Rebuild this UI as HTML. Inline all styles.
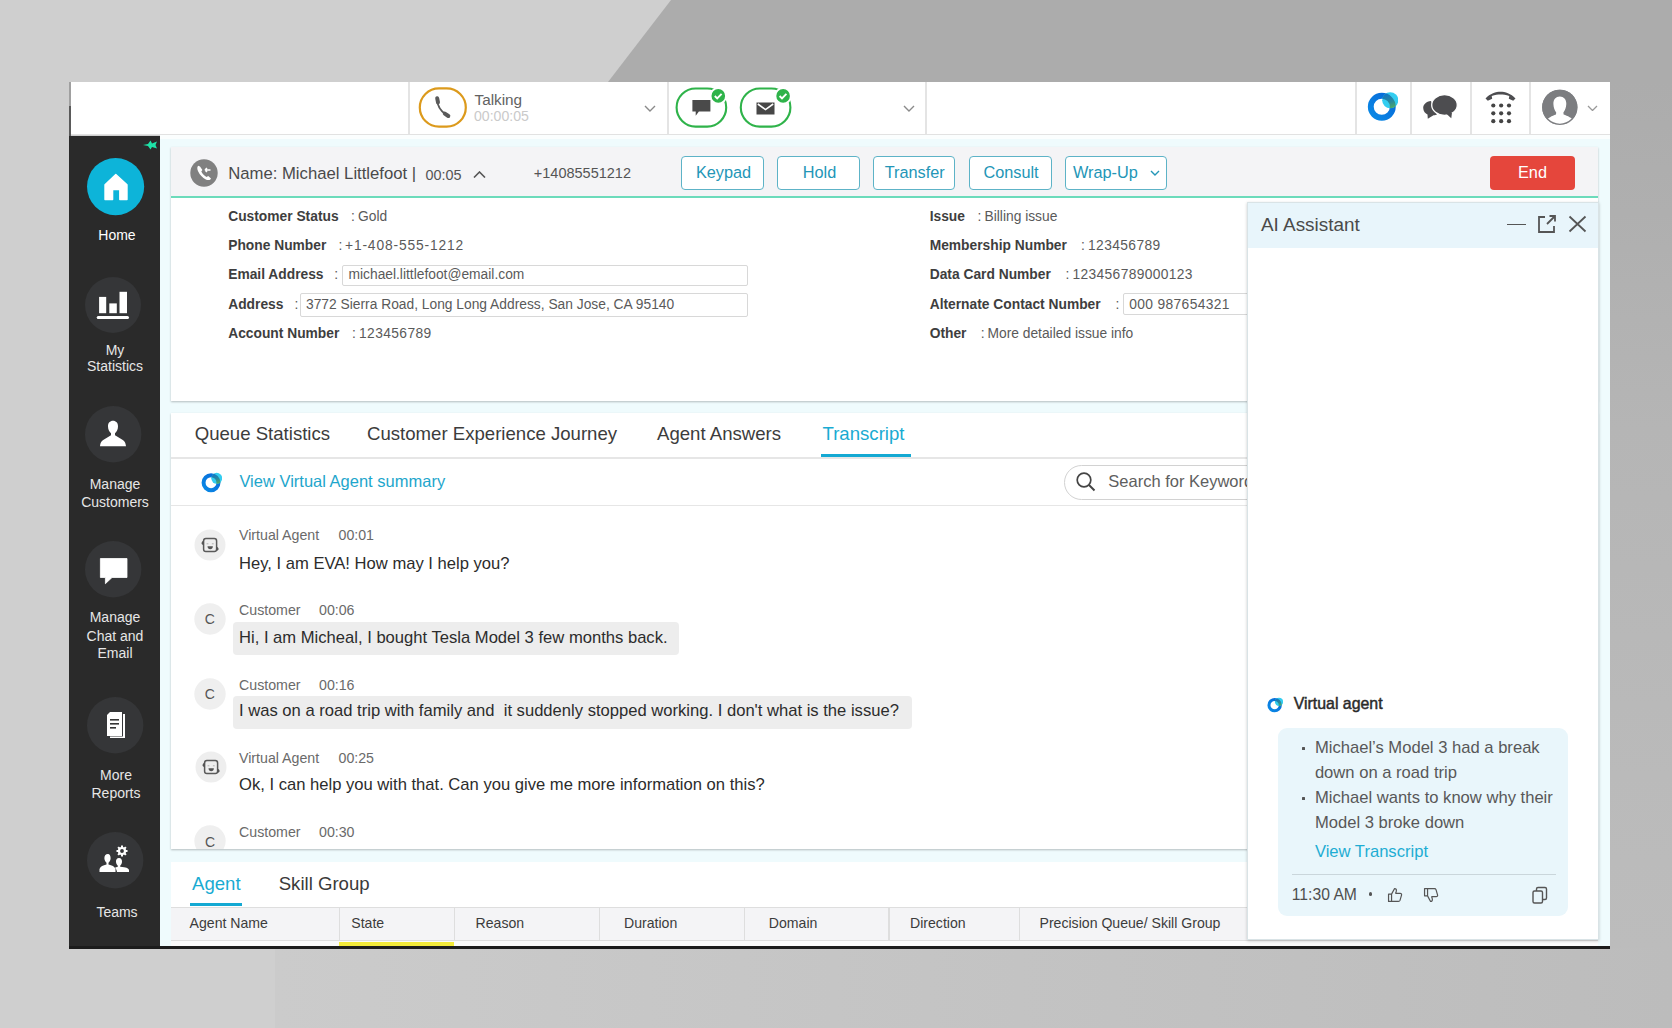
<!DOCTYPE html><html><head><meta charset="utf-8"><style>
html,body{margin:0;padding:0;}
body{width:1672px;height:1028px;overflow:hidden;position:relative;background:#cfcfcf;font-family:"Liberation Sans",sans-serif;}
.a{position:absolute;}
.t{position:absolute;white-space:pre;}
</style></head><body>
<svg class="a" style="left:0;top:0" width="1672" height="1028">
<defs>
<linearGradient id="rs" x1="0" y1="0" x2="0" y2="1"><stop offset="0" stop-color="#acacac"/><stop offset="0.15" stop-color="#afafaf"/><stop offset="0.4" stop-color="#b5b5b5"/><stop offset="0.8" stop-color="#bababa"/><stop offset="1" stop-color="#bcbcbc"/></linearGradient>
<linearGradient id="bt" x1="0" y1="0" x2="1" y2="0"><stop offset="0" stop-color="#cbcbcb"/><stop offset="0.4" stop-color="#c5c5c5"/><stop offset="1" stop-color="#bcbcbc"/></linearGradient>
</defs>
<rect width="1672" height="1028" fill="#cfcfcf"/>
<polygon points="671,0 1672,0 1672,82 608,82" fill="#acacac"/>
<rect x="1610" y="82" width="62" height="866" fill="url(#rs)"/>
<rect x="275" y="948" width="1397" height="80" fill="url(#bt)"/>
</svg>
<div class="a" style="left:69px;top:82px;width:1541px;height:53px;background:#fff;"></div>
<div class="a" style="left:69px;top:134px;width:1541px;height:1px;background:#e2e2e2;"></div>
<div class="a" style="left:69px;top:82px;width:1.5px;height:24px;background:#a0a0a0;"></div>
<div class="a" style="left:69px;top:106px;width:1.5px;height:30px;background:#5a5a5a;"></div>
<div class="a" style="left:408px;top:82px;width:1.5px;height:52px;background:#e4e4e4;"></div>
<div class="a" style="left:667px;top:82px;width:1.5px;height:52px;background:#e4e4e4;"></div>
<div class="a" style="left:925px;top:82px;width:1.5px;height:52px;background:#e4e4e4;"></div>
<div class="a" style="left:1355px;top:82px;width:1.5px;height:52px;background:#e4e4e4;"></div>
<div class="a" style="left:1410px;top:82px;width:1.5px;height:52px;background:#e4e4e4;"></div>
<div class="a" style="left:1470px;top:82px;width:1.5px;height:52px;background:#e4e4e4;"></div>
<div class="a" style="left:1529px;top:82px;width:1.5px;height:52px;background:#e4e4e4;"></div>
<div class="a" style="left:69px;top:136px;width:91px;height:812px;background:#2a2a2a;"></div>
<div class="a" style="left:160px;top:135px;width:1450px;height:813px;background:#effbfd;"></div>
<div class="a" style="left:160px;top:135px;width:1450px;height:4px;background:#fbfefe;"></div>
<svg class="a" style="left:414px;top:84px;" width="58" height="48" viewBox="0 0 58 48"><rect x="5.8" y="4.3" width="46" height="38.4" rx="19.2" ry="19.2" fill="none" stroke="#dc9a1c" stroke-width="2.2"/>
<path d="M23.2 16 C23.4 21.5 26 26.5 32 30.6" fill="none" stroke="#5a5a5a" stroke-width="1.9"/><path d="M23.2 14.3 L24 18.3" stroke="#5a5a5a" stroke-width="4" stroke-linecap="round"/><path d="M30.8 29.6 L34.3 32" stroke="#5a5a5a" stroke-width="4" stroke-linecap="round"/></svg>
<div class="t" style="left:474.5px;top:91.6px;font-size:15.3px;line-height:15.3px;color:#626262;font-weight:400;">Talking</div>
<div class="t" style="left:474.0px;top:109.4px;font-size:14.1px;line-height:14.1px;color:#cacaca;font-weight:400;">00:00:05</div>
<svg class="a" style="left:644.0px;top:104.5px;" width="12" height="7.0" viewBox="0 0 12 7.0"><path d="M1 1 L6.0 6.0 L11 1" fill="none" stroke="#8a8a8a" stroke-width="1.4"/></svg>
<svg class="a" style="left:672px;top:84px;" width="60" height="48" viewBox="0 0 60 48"><rect x="4.6" y="4.5" width="49.6" height="38.1" rx="19" ry="19" fill="none" stroke="#2fb34a" stroke-width="2.1"/>
<path d="M20.4 15.9 h18 v11.6 h-11.5 l-3.2 4.2 v-4.2 h-3.3 z" fill="#4a4a4a"/>
<circle cx="46.3" cy="11.9" r="7.8" fill="#2fb34a" stroke="#fff" stroke-width="2"/>
<path d="M42.8 12 l2.4 2.4 l4.4 -4.6" fill="none" stroke="#fff" stroke-width="1.9"/></svg>
<svg class="a" style="left:736px;top:84px;" width="60" height="48" viewBox="0 0 60 48"><rect x="4.8" y="4.5" width="49.6" height="38.1" rx="19" ry="19" fill="none" stroke="#2fb34a" stroke-width="2.1"/>
<rect x="20.5" y="18.5" width="18" height="12" fill="#474747"/>
<path d="M21.8 20 l7.7 5.6 l7.7 -5.6" fill="none" stroke="#fff" stroke-width="1.6"/>
<circle cx="47.1" cy="11.9" r="7.8" fill="#2fb34a" stroke="#fff" stroke-width="2"/>
<path d="M43.6 12 l2.4 2.4 l4.4 -4.6" fill="none" stroke="#fff" stroke-width="1.9"/></svg>
<svg class="a" style="left:902.6px;top:104.5px;" width="12" height="7.0" viewBox="0 0 12 7.0"><path d="M1 1 L6.0 6.0 L11 1" fill="none" stroke="#8a8a8a" stroke-width="1.4"/></svg>
<svg class="a" style="left:1367.2px;top:91.2px;" width="31" height="31" viewBox="0 0 31 31"><defs><linearGradient id="wg13827" x1="0" y1="1" x2="1" y2="0"><stop offset="0" stop-color="#0a8ae6"/><stop offset="1" stop-color="#0768d8"/></linearGradient>
<linearGradient id="wo13827" x1="0" y1="0" x2="0.3" y2="1"><stop offset="0" stop-color="#0b6fd0"/><stop offset="0.5" stop-color="#2a8a9a"/><stop offset="1" stop-color="#6cc040"/></linearGradient>
<clipPath id="wc13827"><circle cx="23.25" cy="9.299999999999999" r="8.06"/></clipPath></defs>
<circle cx="14.786999999999999" cy="15.81" r="11.004999999999999" fill="none" stroke="url(#wg13827)" stroke-width="5.89"/>
<circle cx="23.25" cy="9.299999999999999" r="8.06" fill="#33cdf0"/>
<circle cx="14.786999999999999" cy="15.81" r="11.004999999999999" fill="none" stroke="url(#wo13827)" stroke-width="5.89" clip-path="url(#wc13827)"/></svg>
<svg class="a" style="left:1421px;top:93px;" width="40" height="30" viewBox="0 0 40 30"><path d="M10 8 C5 8.5 2.2 11.5 2.2 15 C2.2 18.5 4.5 20.5 6.5 21.5 L6.8 25.8 L12.5 22.3 C14 22.2 15 22 16 21.5 Z" fill="#4d4d50"/>
<ellipse cx="23.5" cy="12" rx="12.8" ry="10.3" fill="#4d4d50" stroke="#fff" stroke-width="1.3"/>
<path d="M25 20.5 L30.3 25.3 L31 19.5 Z" fill="#4d4d50"/></svg>
<svg class="a" style="left:1484px;top:90px;" width="34" height="36" viewBox="0 0 34 36"><path d="M1.5 8.5 C6 3.5 12 1.8 16.5 1.8 C21 1.8 27 3.5 31.5 8.5 L29.2 10.8 L24.8 8.8 L25.3 6 C22 4.8 19 4.5 16.5 4.5 C14 4.5 11 4.8 7.7 6 L8.2 8.8 L3.8 10.8 Z" fill="#4d4d50"/>
<circle cx="9.3" cy="15.5" r="2.1" fill="#444"/><circle cx="9.3" cy="23.35" r="2.1" fill="#444"/><circle cx="9.3" cy="31.2" r="2.1" fill="#444"/><circle cx="17.15" cy="15.5" r="2.1" fill="#444"/><circle cx="17.15" cy="23.35" r="2.1" fill="#444"/><circle cx="17.15" cy="31.2" r="2.1" fill="#444"/><circle cx="25.0" cy="15.5" r="2.1" fill="#444"/><circle cx="25.0" cy="23.35" r="2.1" fill="#444"/><circle cx="25.0" cy="31.2" r="2.1" fill="#444"/></svg>
<svg class="a" style="left:1540px;top:89px;" width="38" height="37" viewBox="0 0 38 37"><defs><clipPath id="avc"><circle cx="19.8" cy="18.3" r="17.5"/></clipPath></defs>
<circle cx="19.8" cy="18.3" r="17.6" fill="#7c7d80"/>
<g clip-path="url(#avc)"><path d="M19.8 7.5 C15.8 7.5 13.3 10.5 13.4 15 C13.5 18.5 14.6 21.5 16.2 23.5 L16 25.5 C12 27 8 28.5 5 33 L5 38 L35 38 L35 33 C32 28.5 27.5 27 23.6 25.5 L23.4 23.5 C25 21.5 26.2 18.5 26.3 15 C26.4 10.5 23.8 7.5 19.8 7.5 Z" fill="#fff"/></g>
<circle cx="19.8" cy="18.3" r="17" fill="none" stroke="#7c7d80" stroke-width="1.3"/></svg>
<svg class="a" style="left:1586.9px;top:104.75px;" width="11" height="6.5" viewBox="0 0 11 6.5"><path d="M1 1 L5.5 5.5 L10 1" fill="none" stroke="#999" stroke-width="1.3"/></svg>
<svg class="a" style="left:141px;top:139px;" width="18" height="12" viewBox="0 0 18 12"><path d="M2 6 L7 5 L9.5 1.5 L11 4.5 L16 2.5 L14.5 6 L16 9.5 L11 8 L9.5 10.5 L7 7 Z" fill="#1ee3a8"/></svg>
<svg class="a" style="left:85.69999999999999px;top:157.4px;" width="59.2" height="59.2" viewBox="0 0 59.2 59.2"><circle cx="29.6" cy="29.6" r="28.6" fill="#0db4d9"/></svg>
<svg class="a" style="left:101.5px;top:172px;" width="28" height="30" viewBox="0 0 28 30"><path d="M13.8 2.5 L25 12.8 L25 27.5 L17.8 27.5 L17.8 17.5 L10.6 17.5 L10.6 27.5 L3 27.5 L3 12.8 Z" fill="#fff" stroke="#fff" stroke-width="1.4" stroke-linejoin="round"/></svg>
<div class="t" style="left:72.0px;width:90px;text-align:center;top:228.1px;font-size:14px;line-height:14px;color:#fff;font-weight:400;">Home</div>
<svg class="a" style="left:83.8px;top:276.4px;" width="58" height="58" viewBox="0 0 58 58"><circle cx="29" cy="29" r="28" fill="#353638"/></svg>
<svg class="a" style="left:96px;top:290px;" width="34" height="30" viewBox="0 0 34 30"><rect x="3.1" y="6.9" width="7.1" height="16.3" fill="#fff"/><rect x="13.3" y="13.4" width="7.5" height="9.8" fill="#fff"/><rect x="23.5" y="1.8" width="7.5" height="21.4" fill="#fff"/><rect x="0.7" y="26" width="32.3" height="3" rx="1.5" fill="#fff"/></svg>
<div class="t" style="left:70.0px;width:90px;text-align:center;top:342.9px;font-size:14px;line-height:14px;color:#e6e6e6;font-weight:400;">My</div>
<div class="t" style="left:70.0px;width:90px;text-align:center;top:359.4px;font-size:14px;line-height:14px;color:#e6e6e6;font-weight:400;">Statistics</div>
<svg class="a" style="left:83.8px;top:405.3px;" width="58.4" height="58.4" viewBox="0 0 58.4 58.4"><circle cx="29.2" cy="29.2" r="28.2" fill="#353638"/></svg>
<svg class="a" style="left:99px;top:419px;" width="28" height="30" viewBox="0 0 28 30"><path d="M14 1.8 C11 1.8 8.9 4 9 7.5 C9.1 10.5 10.3 13 12 14.3 L12 16.3 L5 20.5 C3 21.8 1.5 23 1 27.3 L27 27.3 C26.5 23 25 21.8 23 20.5 L16 16.3 L16 14.3 C17.7 13 18.9 10.5 19 7.5 C19.1 4 17 1.8 14 1.8 Z" fill="#fff"/></svg>
<div class="t" style="left:70.0px;width:90px;text-align:center;top:476.9px;font-size:14px;line-height:14px;color:#e6e6e6;font-weight:400;">Manage</div>
<div class="t" style="left:70.0px;width:90px;text-align:center;top:494.6px;font-size:14px;line-height:14px;color:#e6e6e6;font-weight:400;">Customers</div>
<svg class="a" style="left:83.6px;top:540.0999999999999px;" width="58.4" height="58.4" viewBox="0 0 58.4 58.4"><circle cx="29.2" cy="29.2" r="28.2" fill="#353638"/></svg>
<svg class="a" style="left:98px;top:556px;" width="32" height="30" viewBox="0 0 32 30"><path d="M2.4 2.5 h26.6 v19 h-15 l-6.6 6.2 v-6.2 h-5 z" fill="#fff" stroke="#fff" stroke-width="0.8" stroke-linejoin="round"/></svg>
<div class="t" style="left:70.0px;width:90px;text-align:center;top:610.1px;font-size:14px;line-height:14px;color:#e6e6e6;font-weight:400;">Manage</div>
<div class="t" style="left:70.0px;width:90px;text-align:center;top:628.5px;font-size:14px;line-height:14px;color:#e6e6e6;font-weight:400;">Chat and</div>
<div class="t" style="left:70.0px;width:90px;text-align:center;top:646.1px;font-size:14px;line-height:14px;color:#e6e6e6;font-weight:400;">Email</div>
<svg class="a" style="left:85.8px;top:696.3px;" width="58.4" height="58.4" viewBox="0 0 58.4 58.4"><circle cx="29.2" cy="29.2" r="28.2" fill="#353638"/></svg>
<svg class="a" style="left:104px;top:710px;" width="24" height="30" viewBox="0 0 24 30"><path d="M6 2 h12 v24 h-15 v-21 z" fill="#fff"/><path d="M19 4 h2 v24 h-15 v-1.5 h13 z" fill="#fff"/><rect x="6" y="9" width="9" height="1.6" fill="#353535"/><rect x="6" y="13" width="9" height="1.6" fill="#353535"/><rect x="6" y="17" width="6" height="1.6" fill="#353535"/></svg>
<div class="t" style="left:71.0px;width:90px;text-align:center;top:767.7px;font-size:14px;line-height:14px;color:#e6e6e6;font-weight:400;">More</div>
<div class="t" style="left:71.0px;width:90px;text-align:center;top:785.7px;font-size:14px;line-height:14px;color:#e6e6e6;font-weight:400;">Reports</div>
<svg class="a" style="left:85.8px;top:831.3px;" width="58.4" height="58.4" viewBox="0 0 58.4 58.4"><circle cx="29.2" cy="29.2" r="28.2" fill="#353638"/></svg>
<svg class="a" style="left:98px;top:844.5px;" width="36" height="34" viewBox="0 0 36 34"><path d="M10 9 C7.5 9 6.2 11 6.4 13.5 C6.6 15.5 7.5 17 8.5 17.8 L8.5 19.5 C5 20.3 2.5 21.5 1.5 24 L1.5 27 L17.5 27 L17.5 24 C16.5 21.5 14 20.3 10.5 19.5 L10.5 17.8 C11.5 17 12.4 15.5 12.6 13.5 C12.8 11 11.5 9 10 9 Z" fill="#fff"/>
<path d="M21 13 C18.8 13 17.8 14.8 18 17 C18.2 18.8 19 20 19.8 20.7 L19.8 21.8 C18.5 22 17.5 22.5 17 23 C18 23.8 18.8 25 19 27 L31 27 L31 25 C30.2 23 28.3 22.2 22.2 21.8 L22.2 20.7 C23 20 23.8 18.8 24 17 C24.2 14.8 23.2 13 21 13 Z" fill="#fff"/>
<circle cx="24" cy="6" r="3" fill="none" stroke="#fff" stroke-width="2.2"/>
<rect x="23" y="0.5" width="2" height="2.6" fill="#fff" transform="rotate(0 24 6)"/><rect x="23" y="0.5" width="2" height="2.6" fill="#fff" transform="rotate(45 24 6)"/><rect x="23" y="0.5" width="2" height="2.6" fill="#fff" transform="rotate(90 24 6)"/><rect x="23" y="0.5" width="2" height="2.6" fill="#fff" transform="rotate(135 24 6)"/><rect x="23" y="0.5" width="2" height="2.6" fill="#fff" transform="rotate(180 24 6)"/><rect x="23" y="0.5" width="2" height="2.6" fill="#fff" transform="rotate(225 24 6)"/><rect x="23" y="0.5" width="2" height="2.6" fill="#fff" transform="rotate(270 24 6)"/><rect x="23" y="0.5" width="2" height="2.6" fill="#fff" transform="rotate(315 24 6)"/></svg>
<div class="t" style="left:72.0px;width:90px;text-align:center;top:904.6px;font-size:14px;line-height:14px;color:#e6e6e6;font-weight:400;">Teams</div>
<div class="a" style="left:171px;top:147px;width:1427px;height:254px;background:#fff;box-shadow:0 1px 2px rgba(0,0,0,0.25);"></div>
<div class="a" style="left:171px;top:147px;width:1427px;height:49px;background:#f4f4f6;"></div>
<div class="a" style="left:171px;top:196.3px;width:1427px;height:2px;background:#6cdbbb;"></div>
<svg class="a" style="left:190px;top:159px;" width="28" height="28" viewBox="0 0 28 28"><circle cx="14" cy="14" r="13.7" fill="#808080"/>
<path d="M8.2 6.8 C7 8 7 10 8.2 12.5 C9.8 15.8 12.5 18.8 15.8 20.5 C17.8 21.5 19.5 21.2 20.6 20.2 L21 19.6 L18.2 17 L16.6 18 C14.6 17 12.4 14.8 11.3 12.6 L12.4 11 L10 7.6 Z" fill="#fff"/>
<path d="M15 11 h5.5 M15 11 l2 -1.8 M15 11 l2 1.8" stroke="#fff" stroke-width="1.6" fill="none"/></svg>
<div class="t" style="left:228.2px;top:165.9px;font-size:16.7px;line-height:16.7px;color:#4a4a4a;font-weight:400;">Name: Michael Littlefoot |</div>
<div class="t" style="left:425.6px;top:167.8px;font-size:14.4px;line-height:14.4px;color:#555;font-weight:400;">00:05</div>
<svg class="a" style="left:472.5px;top:170.75px;" width="13" height="7.5" viewBox="0 0 13 7.5"><path d="M1 6.5 L6.5 1 L12 6.5" fill="none" stroke="#555" stroke-width="1.6"/></svg>
<div class="t" style="left:533.8px;top:166.2px;font-size:14.5px;line-height:14.5px;color:#555;font-weight:400;">+14085551212</div>
<div class="a" style="left:681px;top:156px;width:81.4px;height:32px;border:1.8px solid #5db3c7;border-radius:4px;background:#fff;"></div>
<div class="t" style="left:681.0px;width:85px;text-align:center;top:164.2px;font-size:16.3px;line-height:16.3px;color:#2396b7;font-weight:400;">Keypad</div>
<div class="a" style="left:777px;top:156px;width:81.4px;height:32px;border:1.8px solid #5db3c7;border-radius:4px;background:#fff;"></div>
<div class="t" style="left:777.0px;width:85px;text-align:center;top:164.2px;font-size:16.3px;line-height:16.3px;color:#2396b7;font-weight:400;">Hold</div>
<div class="a" style="left:872.5px;top:156px;width:80.9px;height:32px;border:1.8px solid #5db3c7;border-radius:4px;background:#fff;"></div>
<div class="t" style="left:872.5px;width:84.5px;text-align:center;top:164.2px;font-size:16.3px;line-height:16.3px;color:#2396b7;font-weight:400;">Transfer</div>
<div class="a" style="left:968.5px;top:156px;width:81.4px;height:32px;border:1.8px solid #5db3c7;border-radius:4px;background:#fff;"></div>
<div class="t" style="left:968.5px;width:85px;text-align:center;top:164.2px;font-size:16.3px;line-height:16.3px;color:#2396b7;font-weight:400;">Consult</div>
<div class="a" style="left:1064.5px;top:156px;width:100.5px;height:32px;border:1.8px solid #5db3c7;border-radius:4px;background:#fff;"></div>
<div class="t" style="left:1073.0px;top:164.2px;font-size:16.3px;line-height:16.3px;color:#2396b7;font-weight:400;">Wrap-Up</div>
<svg class="a" style="left:1150.0px;top:170.0px;" width="10" height="6.0" viewBox="0 0 10 6.0"><path d="M1 1 L5.0 5.0 L9 1" fill="none" stroke="#2396b7" stroke-width="1.4"/></svg>
<div class="a" style="left:1490px;top:156px;width:85px;height:34px;border-radius:4px;background:#e5463c;"></div>
<div class="t" style="left:1490.0px;width:85px;text-align:center;top:164.2px;font-size:16.3px;line-height:16.3px;color:#fff;font-weight:400;">End</div>
<div class="t" style="left:228.2px;top:209.7px;font-size:13.8px;line-height:13.8px;color:#3e3e3e;font-weight:700;">Customer Status</div>
<div class="t" style="left:351.0px;top:209.7px;font-size:13.8px;line-height:13.8px;color:#5a5a5a;font-weight:400;">:</div>
<div class="t" style="left:358.0px;top:209.7px;font-size:13.8px;line-height:13.8px;color:#5a5a5a;font-weight:400;letter-spacing:0px;">Gold</div>
<div class="t" style="left:228.2px;top:239.0px;font-size:13.8px;line-height:13.8px;color:#3e3e3e;font-weight:700;">Phone Number</div>
<div class="t" style="left:338.5px;top:239.0px;font-size:13.8px;line-height:13.8px;color:#5a5a5a;font-weight:400;">:</div>
<div class="t" style="left:345.0px;top:239.0px;font-size:13.8px;line-height:13.8px;color:#5a5a5a;font-weight:400;letter-spacing:0.85px;">+1-408-555-1212</div>
<div class="t" style="left:228.2px;top:268.3px;font-size:13.8px;line-height:13.8px;color:#3e3e3e;font-weight:700;">Email Address</div>
<div class="t" style="left:334.3px;top:268.3px;font-size:13.8px;line-height:13.8px;color:#5a5a5a;font-weight:400;">:</div>
<div class="a" style="left:342px;top:264.6px;width:406px;height:21.399999999999977px;border:1px solid #d8d8d8;border-radius:2px;background:#fff;box-sizing:border-box;"></div>
<div class="t" style="left:348.5px;top:268.3px;font-size:13.8px;line-height:13.8px;color:#5a5a5a;font-weight:400;letter-spacing:0px;">michael.littlefoot@email.com</div>
<div class="t" style="left:228.2px;top:297.6px;font-size:13.8px;line-height:13.8px;color:#3e3e3e;font-weight:700;">Address</div>
<div class="t" style="left:294.6px;top:297.6px;font-size:13.8px;line-height:13.8px;color:#5a5a5a;font-weight:400;">:</div>
<div class="a" style="left:300px;top:293.2px;width:448px;height:23.80000000000001px;border:1px solid #d8d8d8;border-radius:2px;background:#fff;box-sizing:border-box;"></div>
<div class="t" style="left:306.0px;top:297.6px;font-size:13.8px;line-height:13.8px;color:#5a5a5a;font-weight:400;letter-spacing:0px;">3772 Sierra Road, Long Long Address, San Jose, CA 95140</div>
<div class="t" style="left:228.2px;top:326.9px;font-size:13.8px;line-height:13.8px;color:#3e3e3e;font-weight:700;">Account Number</div>
<div class="t" style="left:352.0px;top:326.9px;font-size:13.8px;line-height:13.8px;color:#5a5a5a;font-weight:400;">:</div>
<div class="t" style="left:359.0px;top:326.9px;font-size:13.8px;line-height:13.8px;color:#5a5a5a;font-weight:400;letter-spacing:0.4px;">123456789</div>
<div class="t" style="left:929.7px;top:209.7px;font-size:13.8px;line-height:13.8px;color:#3e3e3e;font-weight:700;">Issue</div>
<div class="t" style="left:977.5px;top:209.7px;font-size:13.8px;line-height:13.8px;color:#5a5a5a;font-weight:400;">:</div>
<div class="t" style="left:984.5px;top:209.7px;font-size:13.8px;line-height:13.8px;color:#5a5a5a;font-weight:400;letter-spacing:0px;">Billing issue</div>
<div class="t" style="left:929.7px;top:239.0px;font-size:13.8px;line-height:13.8px;color:#3e3e3e;font-weight:700;">Membership Number</div>
<div class="t" style="left:1081.0px;top:239.0px;font-size:13.8px;line-height:13.8px;color:#5a5a5a;font-weight:400;">:</div>
<div class="t" style="left:1088.0px;top:239.0px;font-size:13.8px;line-height:13.8px;color:#5a5a5a;font-weight:400;letter-spacing:0.4px;">123456789</div>
<div class="t" style="left:929.7px;top:268.3px;font-size:13.8px;line-height:13.8px;color:#3e3e3e;font-weight:700;">Data Card Number</div>
<div class="t" style="left:1065.4px;top:268.3px;font-size:13.8px;line-height:13.8px;color:#5a5a5a;font-weight:400;">:</div>
<div class="t" style="left:1072.5px;top:268.3px;font-size:13.8px;line-height:13.8px;color:#5a5a5a;font-weight:400;letter-spacing:0.35px;">123456789000123</div>
<div class="t" style="left:929.7px;top:297.6px;font-size:13.8px;line-height:13.8px;color:#3e3e3e;font-weight:700;">Alternate Contact Number</div>
<div class="t" style="left:1115.4px;top:297.6px;font-size:13.8px;line-height:13.8px;color:#5a5a5a;font-weight:400;">:</div>
<div class="a" style="left:1123px;top:292.7px;width:177px;height:22.80000000000001px;border:1px solid #d8d8d8;border-radius:2px;background:#fff;box-sizing:border-box;"></div>
<div class="t" style="left:1129.3px;top:297.6px;font-size:13.8px;line-height:13.8px;color:#5a5a5a;font-weight:400;letter-spacing:0.35px;">000 987654321</div>
<div class="t" style="left:929.7px;top:326.9px;font-size:13.8px;line-height:13.8px;color:#3e3e3e;font-weight:700;">Other</div>
<div class="t" style="left:980.7px;top:326.9px;font-size:13.8px;line-height:13.8px;color:#5a5a5a;font-weight:400;">:</div>
<div class="t" style="left:987.5px;top:326.9px;font-size:13.8px;line-height:13.8px;color:#5a5a5a;font-weight:400;letter-spacing:0px;">More detailed issue info</div>
<div class="a" style="left:171px;top:413px;width:1427px;height:436px;background:#fff;box-shadow:0 1px 2px rgba(0,0,0,0.25);"></div>
<div class="t" style="left:194.7px;top:424.8px;font-size:18.6px;line-height:18.6px;color:#3c3c3c;font-weight:400;">Queue Statistics</div>
<div class="t" style="left:367.0px;top:424.8px;font-size:18.6px;line-height:18.6px;color:#3c3c3c;font-weight:400;">Customer Experience Journey</div>
<div class="t" style="left:657.0px;top:424.8px;font-size:18.6px;line-height:18.6px;color:#3c3c3c;font-weight:400;">Agent Answers</div>
<div class="t" style="left:822.5px;top:424.8px;font-size:18.6px;line-height:18.6px;color:#19abd2;font-weight:400;">Transcript</div>
<div class="a" style="left:171px;top:457px;width:1427px;height:1.5px;background:#e6e6e6;"></div>
<div class="a" style="left:820.5px;top:453.5px;width:90.5px;height:3.5px;background:#14a9d3;"></div>
<svg class="a" style="left:201.1px;top:472.1px;" width="21" height="21" viewBox="0 0 21 21"><defs><linearGradient id="wg2116" x1="0" y1="1" x2="1" y2="0"><stop offset="0" stop-color="#0a8ae6"/><stop offset="1" stop-color="#0768d8"/></linearGradient>
<linearGradient id="wo2116" x1="0" y1="0" x2="0.3" y2="1"><stop offset="0" stop-color="#0b6fd0"/><stop offset="0.5" stop-color="#2a8a9a"/><stop offset="1" stop-color="#6cc040"/></linearGradient>
<clipPath id="wc2116"><circle cx="15.75" cy="6.3" r="5.46"/></clipPath></defs>
<circle cx="10.017" cy="10.71" r="7.455" fill="none" stroke="url(#wg2116)" stroke-width="3.99"/>
<circle cx="15.75" cy="6.3" r="5.46" fill="#33cdf0"/>
<circle cx="10.017" cy="10.71" r="7.455" fill="none" stroke="url(#wo2116)" stroke-width="3.99" clip-path="url(#wc2116)"/></svg>
<div class="t" style="left:239.4px;top:473.2px;font-size:16.5px;line-height:16.5px;color:#1ea6cc;font-weight:400;">View Virtual Agent summary</div>
<div class="a" style="left:1064px;top:465px;width:260px;height:35px;border:1.3px solid #d2d2d2;border-radius:18px;background:#fff;box-sizing:border-box;"></div>
<svg class="a" style="left:1075px;top:471px;" width="22" height="22" viewBox="0 0 22 22"><circle cx="9" cy="9" r="6.8" fill="none" stroke="#444" stroke-width="1.7"/><path d="M14 14 L19.5 19.5" stroke="#444" stroke-width="1.9"/></svg>
<div class="t" style="left:1108.3px;top:473.3px;font-size:16.5px;line-height:16.5px;color:#5e5e5e;font-weight:400;">Search for Keyword</div>
<div class="a" style="left:171px;top:504.5px;width:1427px;height:1.2px;background:#e6e6e6;"></div>
<svg class="a" style="left:193.8px;top:528.5px;" width="32" height="32" viewBox="0 0 32 32"><circle cx="16" cy="16" r="15.5" fill="#eeeeee"/>
<rect x="9.6" y="9.6" width="13" height="13" rx="2.3" fill="none" stroke="#5a5a5a" stroke-width="1.5"/>
<path d="M10 11.5 C8.5 11.8 7.5 13 7.5 14.5 C8 15.5 9 16 10 16.3 Z" fill="#555"/>
<path d="M22.2 17.5 C23.6 17.8 24.6 19 24.6 20.3 C24.2 21.3 23.2 21.8 22.2 22 Z" fill="#555"/>
<path d="M13.5 17.2 H18.9 C18.9 19.2 17.7 20.2 16.2 20.2 C14.7 20.2 13.5 19.2 13.5 17.2 Z" fill="#555"/>
<path d="M12.6 14.8 h1.8 M17.9 14.8 h1.8" stroke="#aaa" stroke-width="0.9"/></svg>
<div class="t" style="left:239.0px;top:528.3px;font-size:14.2px;line-height:14.2px;color:#6a6a6a;font-weight:400;">Virtual Agent</div>
<div class="t" style="left:338.5px;top:528.3px;font-size:14.2px;line-height:14.2px;color:#6a6a6a;font-weight:400;">00:01</div>
<div class="t" style="left:239.0px;top:555.5px;font-size:16.6px;line-height:16.6px;color:#2c2c2c;font-weight:400;">Hey, I am EVA! How may I help you?</div>
<svg class="a" style="left:193.8px;top:602.8px;" width="32" height="32" viewBox="0 0 32 32"><circle cx="16" cy="16" r="15.7" fill="#efefef"/></svg>
<div class="t" style="left:194.8px;width:30px;text-align:center;top:611.9px;font-size:14px;line-height:14px;color:#555;font-weight:400;">C</div>
<div class="t" style="left:239.0px;top:602.6px;font-size:14.2px;line-height:14.2px;color:#6a6a6a;font-weight:400;">Customer</div>
<div class="t" style="left:319.0px;top:602.6px;font-size:14.2px;line-height:14.2px;color:#6a6a6a;font-weight:400;">00:06</div>
<div class="a" style="left:232.8px;top:622px;width:446.5px;height:32.5px;background:#ededed;border-radius:4px;"></div>
<div class="t" style="left:239.0px;top:629.7px;font-size:16.6px;line-height:16.6px;color:#2c2c2c;font-weight:400;">Hi, I am Micheal, I bought Tesla Model 3 few months back.</div>
<svg class="a" style="left:193.8px;top:677.7px;" width="32" height="32" viewBox="0 0 32 32"><circle cx="16" cy="16" r="15.7" fill="#efefef"/></svg>
<div class="t" style="left:194.8px;width:30px;text-align:center;top:686.8px;font-size:14px;line-height:14px;color:#555;font-weight:400;">C</div>
<div class="t" style="left:239.0px;top:677.5px;font-size:14.2px;line-height:14.2px;color:#6a6a6a;font-weight:400;">Customer</div>
<div class="t" style="left:319.0px;top:677.5px;font-size:14.2px;line-height:14.2px;color:#6a6a6a;font-weight:400;">00:16</div>
<div class="a" style="left:233px;top:695.6px;width:679px;height:33px;background:#ededed;border-radius:4px;"></div>
<div class="t" style="left:239.0px;top:703.3px;font-size:16.6px;line-height:16.6px;color:#2c2c2c;font-weight:400;">I was on a road trip with family and  it suddenly stopped working. I don't what is the issue?</div>
<svg class="a" style="left:194.6px;top:751px;" width="32" height="32" viewBox="0 0 32 32"><circle cx="16" cy="16" r="15.5" fill="#eeeeee"/>
<rect x="9.6" y="9.6" width="13" height="13" rx="2.3" fill="none" stroke="#5a5a5a" stroke-width="1.5"/>
<path d="M10 11.5 C8.5 11.8 7.5 13 7.5 14.5 C8 15.5 9 16 10 16.3 Z" fill="#555"/>
<path d="M22.2 17.5 C23.6 17.8 24.6 19 24.6 20.3 C24.2 21.3 23.2 21.8 22.2 22 Z" fill="#555"/>
<path d="M13.5 17.2 H18.9 C18.9 19.2 17.7 20.2 16.2 20.2 C14.7 20.2 13.5 19.2 13.5 17.2 Z" fill="#555"/>
<path d="M12.6 14.8 h1.8 M17.9 14.8 h1.8" stroke="#aaa" stroke-width="0.9"/></svg>
<div class="t" style="left:239.0px;top:751.2px;font-size:14.2px;line-height:14.2px;color:#6a6a6a;font-weight:400;">Virtual Agent</div>
<div class="t" style="left:338.5px;top:751.2px;font-size:14.2px;line-height:14.2px;color:#6a6a6a;font-weight:400;">00:25</div>
<div class="t" style="left:239.0px;top:777.1px;font-size:16.6px;line-height:16.6px;color:#2c2c2c;font-weight:400;">Ok, I can help you with that. Can you give me more information on this?</div>
<div class="a" style="left:171px;top:815px;width:400px;height:34px;overflow:hidden;">
<svg class="a" style="left:23px;top:10px" width="32" height="32"><circle cx="16" cy="16" r="15.7" fill="#efefef"/></svg>
<div class="t" style="left:23px;width:32px;text-align:center;top:20.1px;font-size:14px;line-height:14px;color:#555;">C</div>
</div>
<div class="t" style="left:239.0px;top:825.0px;font-size:14.2px;line-height:14.2px;color:#6a6a6a;font-weight:400;">Customer</div>
<div class="t" style="left:319.0px;top:825.0px;font-size:14.2px;line-height:14.2px;color:#6a6a6a;font-weight:400;">00:30</div>
<div class="a" style="left:171px;top:862px;width:1427px;height:86px;background:#fff;"></div>
<div class="t" style="left:192.0px;top:874.9px;font-size:18.6px;line-height:18.6px;color:#19abd2;font-weight:400;">Agent</div>
<div class="a" style="left:189.6px;top:902.5px;width:52.7px;height:3.5px;background:#14a9d3;"></div>
<div class="t" style="left:278.7px;top:874.9px;font-size:18.6px;line-height:18.6px;color:#3a3a3a;font-weight:400;">Skill Group</div>
<div class="a" style="left:171px;top:906.5px;width:1427px;height:40px;background:#f4f4f6;border-top:1px solid #dedede;box-sizing:border-box;"></div>
<div class="a" style="left:339px;top:907px;width:1.2px;height:39px;background:#dedede;"></div>
<div class="a" style="left:454px;top:907px;width:1.2px;height:39px;background:#dedede;"></div>
<div class="a" style="left:598.6px;top:907px;width:1.2px;height:39px;background:#dedede;"></div>
<div class="a" style="left:744.3px;top:907px;width:1.2px;height:39px;background:#dedede;"></div>
<div class="a" style="left:888.4px;top:907px;width:1.2px;height:39px;background:#dedede;"></div>
<div class="a" style="left:1019px;top:907px;width:1.2px;height:39px;background:#dedede;"></div>
<div class="t" style="left:189.6px;top:916.1px;font-size:14.1px;line-height:14.1px;color:#3c3c3c;font-weight:400;">Agent Name</div>
<div class="t" style="left:351.3px;top:916.1px;font-size:14.1px;line-height:14.1px;color:#3c3c3c;font-weight:400;">State</div>
<div class="t" style="left:475.6px;top:916.1px;font-size:14.1px;line-height:14.1px;color:#3c3c3c;font-weight:400;">Reason</div>
<div class="t" style="left:624.0px;top:916.1px;font-size:14.1px;line-height:14.1px;color:#3c3c3c;font-weight:400;">Duration</div>
<div class="t" style="left:768.8px;top:916.1px;font-size:14.1px;line-height:14.1px;color:#3c3c3c;font-weight:400;">Domain</div>
<div class="t" style="left:910.0px;top:916.1px;font-size:14.1px;line-height:14.1px;color:#3c3c3c;font-weight:400;">Direction</div>
<div class="t" style="left:1039.5px;top:916.1px;font-size:14.1px;line-height:14.1px;color:#3c3c3c;font-weight:400;">Precision Queue/ Skill Group</div>
<div class="a" style="left:171px;top:940px;width:1427px;height:1px;background:#dedede;"></div>
<div class="a" style="left:171px;top:941px;width:1427px;height:5px;background:#fafafa;"></div>
<div class="a" style="left:339px;top:941.5px;width:115px;height:4.5px;background:#f3ea3a;"></div>
<div class="a" style="left:1246.5px;top:202px;width:352.5px;height:738px;background:#fff;border:1px solid #d9e3e6;box-sizing:border-box;box-shadow:0 1px 3px rgba(0,0,0,0.2);"></div>
<div class="a" style="left:1248px;top:203px;width:350px;height:44.5px;background:#e8f5fb;"></div>
<div class="t" style="left:1261.0px;top:216.2px;font-size:18.9px;line-height:18.9px;color:#4a4a4a;font-weight:400;">AI Assistant</div>
<div class="a" style="left:1507px;top:223.5px;width:18.5px;height:1.8px;background:#555;"></div>
<svg class="a" style="left:1536px;top:213px;" width="22" height="22" viewBox="0 0 22 22"><path d="M9 4 H3 V19 H18 V13" fill="none" stroke="#555" stroke-width="1.8"/><path d="M11 11 L19 3 M13.5 3 H19 V8.5" fill="none" stroke="#555" stroke-width="1.8"/></svg>
<svg class="a" style="left:1567px;top:214px;" width="22" height="20" viewBox="0 0 22 20"><path d="M2.5 2.5 L18.5 17.5 M18.5 2.5 L2.5 17.5" stroke="#555" stroke-width="1.8"/></svg>
<svg class="a" style="left:1267.4px;top:696.5px;" width="16" height="16" viewBox="0 0 16 16"><defs><linearGradient id="wg12754" x1="0" y1="1" x2="1" y2="0"><stop offset="0" stop-color="#0a8ae6"/><stop offset="1" stop-color="#0768d8"/></linearGradient>
<linearGradient id="wo12754" x1="0" y1="0" x2="0.3" y2="1"><stop offset="0" stop-color="#0b6fd0"/><stop offset="0.5" stop-color="#2a8a9a"/><stop offset="1" stop-color="#6cc040"/></linearGradient>
<clipPath id="wc12754"><circle cx="12.0" cy="4.8" r="4.16"/></clipPath></defs>
<circle cx="7.632" cy="8.16" r="5.68" fill="none" stroke="url(#wg12754)" stroke-width="3.04"/>
<circle cx="12.0" cy="4.8" r="4.16" fill="#33cdf0"/>
<circle cx="7.632" cy="8.16" r="5.68" fill="none" stroke="url(#wo12754)" stroke-width="3.04" clip-path="url(#wc12754)"/></svg>
<div class="t" style="left:1293.7px;top:695.9px;font-size:15.9px;line-height:15.9px;color:#2a2a2a;font-weight:400;-webkit-text-stroke:0.45px #2a2a2a;">Virtual agent</div>
<div class="a" style="left:1278px;top:727.7px;width:290.3px;height:188.8px;background:#e9f6fb;border-radius:9px;"></div>
<div class="t" style="left:1314.9px;top:740.3px;font-size:16.6px;line-height:16.6px;color:#585858;font-weight:400;">Michael’s Model 3 had a break</div>
<div class="t" style="left:1314.9px;top:764.7px;font-size:16.6px;line-height:16.6px;color:#585858;font-weight:400;">down on a road trip</div>
<div class="t" style="left:1314.9px;top:789.8px;font-size:16.6px;line-height:16.6px;color:#585858;font-weight:400;">Michael wants to know why their</div>
<div class="t" style="left:1314.9px;top:814.7px;font-size:16.6px;line-height:16.6px;color:#585858;font-weight:400;">Model 3 broke down</div>
<div class="a" style="left:1302px;top:747px;width:3px;height:3px;background:#555;border-radius:0.5px;"></div>
<div class="a" style="left:1302px;top:796.5px;width:3px;height:3px;background:#555;border-radius:0.5px;"></div>
<div class="t" style="left:1314.9px;top:843.5px;font-size:16.6px;line-height:16.6px;color:#1eadd3;font-weight:400;">View Transcript</div>
<div class="a" style="left:1292px;top:874px;width:263.5px;height:1.2px;background:#cad6db;"></div>
<div class="t" style="left:1291.8px;top:886.9px;font-size:15.7px;line-height:15.7px;color:#4e4e4e;font-weight:400;">11:30 AM</div>
<div class="a" style="left:1368.6px;top:892.4px;width:3.8px;height:3.8px;background:#555;border-radius:2px;"></div>
<svg class="a" style="left:1385px;top:885px;" width="20" height="20" viewBox="0 0 20 20"><path transform="translate(10 10) scale(0.86) translate(-10 -10)" d="M2.5 9 H6 V17.5 H2.5 Z M6 9 L9.5 2.5 C11 2.5 12 3.5 11.5 5.5 L10.8 8 H16 C17.2 8 18 9 17.6 10.2 L15.8 16.3 C15.5 17.2 14.8 17.5 14 17.5 H6" fill="none" stroke="#555" stroke-width="1.4" stroke-linejoin="round"/></svg>
<svg class="a" style="left:1421px;top:885px;" width="20" height="20" viewBox="0 0 20 20"><path transform="translate(10 10) scale(0.86) translate(-10 -10)" d="M2.5 11 H6 V2.5 H2.5 Z M6 11 L9.5 17.5 C11 17.5 12 16.5 11.5 14.5 L10.8 12 H16 C17.2 12 18 11 17.6 9.8 L15.8 3.7 C15.5 2.8 14.8 2.5 14 2.5 H6" fill="none" stroke="#555" stroke-width="1.4" stroke-linejoin="round"/></svg>
<svg class="a" style="left:1530px;top:885px;" width="20" height="20" viewBox="0 0 20 20"><rect x="3" y="6" width="9.5" height="12" rx="1.5" fill="none" stroke="#555" stroke-width="1.4"/><path d="M6.5 6 V4 C6.5 3 7 2.5 8 2.5 H15 C16 2.5 16.5 3 16.5 4 V13 C16.5 14 16 14.5 15 14.5 H12.5" fill="none" stroke="#555" stroke-width="1.4"/></svg>
<div class="a" style="left:69px;top:946px;width:1541px;height:2.5px;background:#1c1c1c;"></div>
</body></html>
